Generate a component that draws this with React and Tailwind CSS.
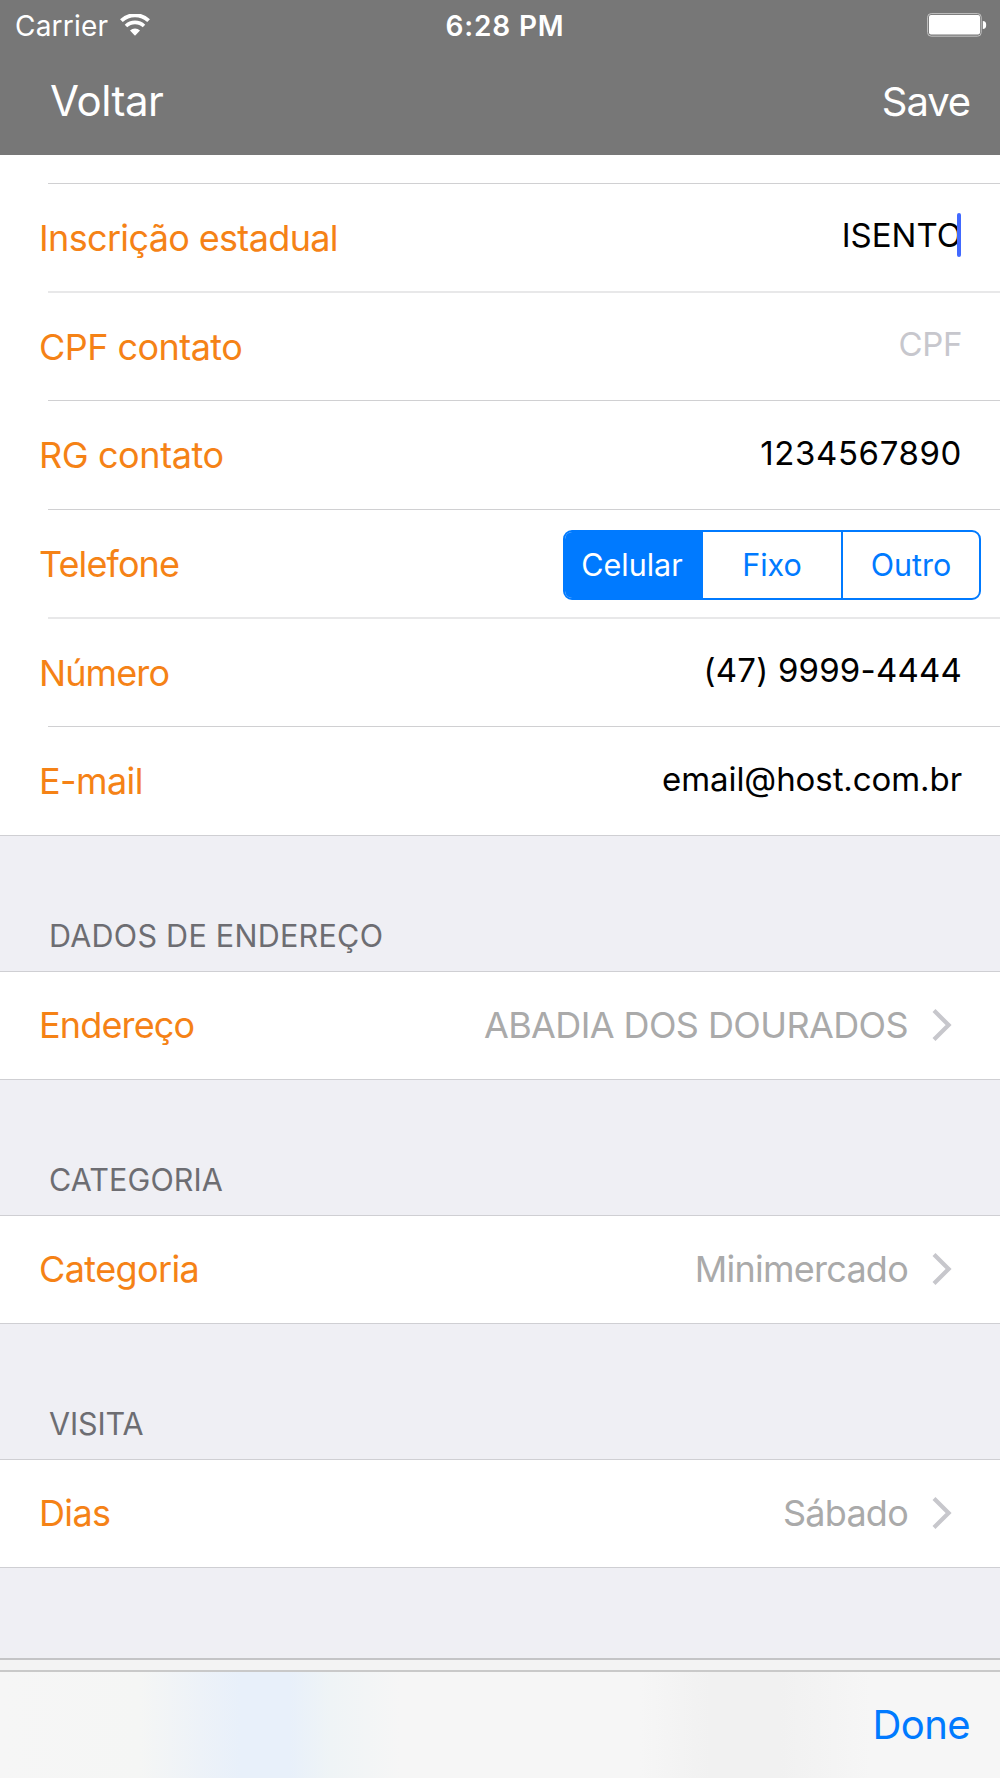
import { useState } from 'react'

const phoneTypes = ['Celular', 'Fixo', 'Outro']

function WifiIcon() {
  return (
    <svg width="30" height="22" viewBox="0 0 30 22" fill="none">
      <path d="M1.4 6.6a20 20 0 0 1 27.2 0" stroke="white" strokeWidth="4" />
      <path d="M6 12a13 13 0 0 1 18 0" stroke="white" strokeWidth="3.6" />
      <path d="M15 21.8l-5-5.2a7.2 7.2 0 0 1 10 0z" fill="white" />
    </svg>
  )
}

function BatteryIcon() {
  return (
    <svg width="60" height="24" viewBox="0 0 60 24" fill="none">
      <rect x="0.6" y="0.6" width="53.6" height="22.6" rx="3.6" stroke="#c4c4c4" strokeWidth="1" />
      <rect x="2" y="2" width="51" height="19.5" rx="2" fill="white" />
      <path d="M55.8 8a3.4 4 0 0 1 0 8z" fill="white" />
    </svg>
  )
}

function Chevron() {
  return (
    <svg width="20" height="32" viewBox="0 0 20 32" fill="none" className="shrink-0">
      <path d="M2 1.6L16.6 16L2 30.4" stroke="#c7c7cc" strokeWidth="4.2" />
    </svg>
  )
}

function Label({ children, tracking = 'tracking-[-0.65px]' }) {
  return <span className={`text-[36px] leading-none whitespace-nowrap text-[#f58216] ${tracking}`}>{children}</span>
}

// Thin separators render as one solid pixel, soft ones as two lighter pixels
function Separator({ soft }) {
  return <div className={soft ? 'ml-12 h-0.5 bg-[#e8e8e9]' : 'ml-12 h-px bg-[#d0d0d2]'} />
}

function FieldRow({ label, labelTracking, value, placeholder, focused, tracking = '', className }) {
  return (
    <div className={`flex items-center justify-between pr-[38px] pl-[39px] ${className}`}>
      <Label tracking={labelTracking}>{label}</Label>
      <div className={`relative pb-1 text-[33px] leading-none ${tracking} ${value ? 'text-black' : 'text-[#c7c7cd]'}`}>
        {value || placeholder}
        {focused && <span className="absolute -top-[6px] right-px h-11 w-1 rounded-sm bg-[#4169ff]" />}
      </div>
    </div>
  )
}

function LinkSection({ title, titleTracking, label, labelTracking, value, tracking }) {
  return (
    <section>
      <div className="flex h-[135px] items-end pb-[17px] pl-[49px]">
        <h2 className={`text-[30.5px] leading-9 text-[#6d6d72] ${titleTracking}`}>{title}</h2>
      </div>
      <div className="flex h-[109px] items-center justify-between border-y border-[#cfcfd3] bg-white pr-12 pb-px pl-[39px]">
        <Label tracking={labelTracking}>{label}</Label>
        <div className="flex items-center gap-6">
          <span className={`text-[36px] leading-none text-[#aaaaaa] ${tracking}`}>{value}</span>
          <Chevron />
        </div>
      </div>
    </section>
  )
}

export default function App() {
  const [phoneType, setPhoneType] = useState('Celular')

  return (
    <div className="flex h-[1778px] w-[1000px] flex-col overflow-hidden bg-[#efeff4] font-['Inter',sans-serif]">
      {/* Status bar and navigation */}
      <header className="h-[155px] shrink-0 bg-[#777777] text-white">
        <div className="grid h-[49px] grid-cols-3 items-center pr-[13px] pl-[15px]">
          <div className="flex items-center gap-3">
            <span className="mt-0.5 text-[28px] leading-none tracking-[0.2px]">Carrier</span>
            <WifiIcon />
          </div>
          <span className="mt-0.5 pl-2 text-center text-[28px] leading-none font-semibold tracking-[0.85px]">6:28 PM</span>
          <div className="flex justify-end">
            <BatteryIcon />
          </div>
        </div>
        <div className="flex h-[106px] items-center justify-between pr-[30px] pb-[3px] pl-[50px]">
          <button className="text-[42px] leading-none tracking-[-0.45px]">Voltar</button>
          <button className="mt-0.5 text-[40px] leading-none tracking-[-1.1px]">Save</button>
        </div>
      </header>

      <main className="flex-1">
        {/* Contact fields */}
        <section className="bg-white pt-7">
          <Separator />
          <FieldRow className="h-[107px]" label="Inscrição estadual" value="ISENTO" focused />
          <Separator soft />
          <FieldRow className="h-[107px]" label="CPF contato" labelTracking="tracking-[-0.55px]" placeholder="CPF" tracking="tracking-[-0.4px]" />
          <Separator />
          <FieldRow className="h-[108px]" label="RG contato" labelTracking="tracking-[-0.4px]" value="1234567890" tracking="tracking-[0.6px]" />
          <Separator />
          <div className="flex h-[107px] items-center justify-between pr-[19px] pl-[39px]">
            <Label tracking="tracking-[-0.9px]">Telefone</Label>
            <div className="mt-[3px] grid h-[70px] w-[418px] grid-cols-[138px_140px_136px] divide-x-2 divide-[#007aff] overflow-hidden rounded-[9px] border-2 border-[#007aff]">
              {phoneTypes.map(type => (
                <button
                  key={type}
                  onClick={() => setPhoneType(type)}
                  className={`text-[30.5px] leading-none ${phoneType === type ? 'bg-[#007aff] pr-0.5 text-white' : 'text-[#007aff]'}`}
                >
                  {type}
                </button>
              ))}
            </div>
          </div>
          <Separator soft />
          <FieldRow className="h-[107px]" label="Número" labelTracking="tracking-[-0.9px]" value="(47) 9999-4444" tracking="tracking-[0.2px]" />
          <Separator />
          <FieldRow className="h-[108px]" label="E-mail" labelTracking="tracking-[-0.6px]" value="email@host.com.br" tracking="tracking-[-0.08px]" />
        </section>
        <div className="h-px bg-[#cfcfd3]" />

        <LinkSection
          title="DADOS DE ENDEREÇO"
          titleTracking="tracking-[0.27px]"
          label="Endereço"
          labelTracking="tracking-[-0.85px]"
          value="ABADIA DOS DOURADOS"
          tracking="tracking-[-0.6px]"
        />
        <LinkSection
          title="CATEGORIA"
          titleTracking="tracking-[0.1px]"
          label="Categoria"
          labelTracking="tracking-[-0.6px]"
          value="Minimercado"
          tracking="tracking-[-0.75px]"
        />
        <LinkSection title="VISITA" titleTracking="tracking-[-0.1px]" label="Dias" value="Sábado" tracking="tracking-[-0.75px]" />
      </main>

      {/* Keyboard accessory bar */}
      <footer className="h-[120px] shrink-0 border-t-2 border-[#c4c4c6] bg-[#f3f3f3]">
        <div className="h-[10px]" />
        <div className="flex h-[108px] items-center justify-end border-t-2 border-[#c9c9c9] bg-[linear-gradient(90deg,#f6f6f6_0%,#f5f6f5_14%,#edf2f8_20%,#e8f0fa_24%,#e8f0fa_29%,#eff4f6_33%,#f6f6f6_40%,#f6f6f6_64%,#f1f1f1_71%,#f1f1f1_78%,#f6f6f6_87%)] pr-[30px]">
          <button className="text-[40px] leading-none tracking-[-0.6px] text-[#007aff]">Done</button>
        </div>
      </footer>
    </div>
  )
}
